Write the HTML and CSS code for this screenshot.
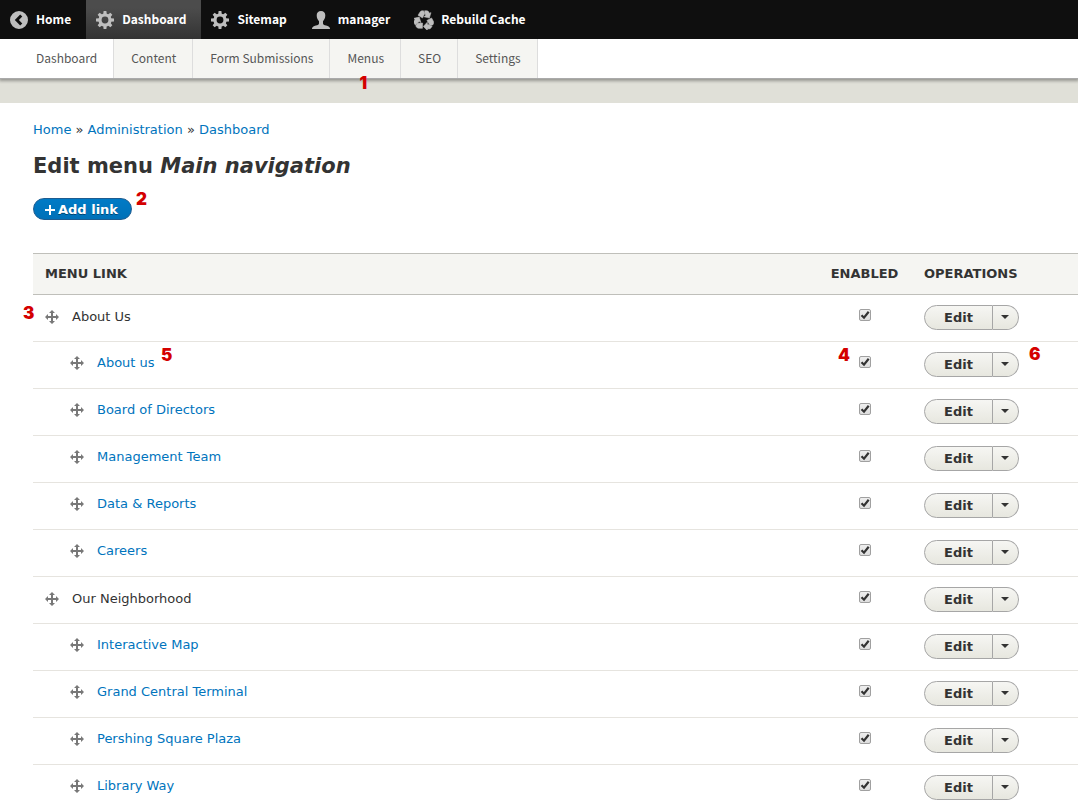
FILE: index.html
```
<!DOCTYPE html>
<html lang="en">
<head>
<meta charset="utf-8">
<meta name="viewport" content="width=device-width, initial-scale=1">
<title>Edit menu Main navigation</title>
<link rel="stylesheet" href="styles.css">
</head>
<body>
<svg class="sprite" aria-hidden="true">
  <symbol id="back" viewBox="0 0 18 18"><path fill-rule="evenodd" d="M9 0a9 9 0 1 0 0 18A9 9 0 0 0 9 0zM10.2 3.600l2.100 2L8.900 9l3.400 3.400-2.100 2L4.800 9z"/></symbol>
  <symbol id="gear" viewBox="0 0 18 18"><circle cx="9" cy="9" r="5" fill="none" stroke="currentColor" stroke-width="3.200"/><path d="M7.200 3.500L7.600 0h2.800l.4 3.500zM7.200 14.500L7.600 18h2.800l.4-3.500zM3.500 7.200L0 7.600v2.800l3.500.4zM14.500 7.200L18 7.600v2.800l-3.500.4z"/><path transform="rotate(45 9 9)" d="M7.200 3.500L7.600 0h2.800l.4 3.500zM7.200 14.500L7.600 18h2.800l.4-3.500zM3.500 7.200L0 7.600v2.800l3.500.4zM14.500 7.200L18 7.600v2.800l-3.500.4z"/></symbol>
  <symbol id="person" viewBox="0 0 18 18"><path d="M9 0C6.300 0 4.700 1.700 4.700 4.300c0 2.700 1 4.700 2.300 5.900v2c0 1-.7 1.600-2 2C2 15 0 15.600 0 17.600V18h18v-.4c0-2-2-2.600-5-3.400-1.300-.4-2-1-2-2v-2c1.300-1.200 2.300-3.200 2.300-5.900C13.300 1.700 11.700 0 9 0z"/></symbol>
  <symbol id="recycle" viewBox="0 0 20 20"><g id="arm" stroke="currentColor" stroke-width=".5"><path d="M4 5.200L6.200 1.700Q7 .7 8.200.7h1.300L10.900 3.300 8.500 8z"/><path d="M10.600.7h2.200q1.200 0 1.800 1l.9 1.600 1.500-.7-1.600 5.500-5.600-1.300 1.700-1z"/></g><use href="#arm" transform="rotate(120 10 10.500)"/><use href="#arm" transform="rotate(240 10 10.500)"/></symbol>
  <symbol id="move" viewBox="0 0 14 14"><path d="M7 0l3 3H8v3h3V4l3 3-3 3V8H8v3h2l-3 3-3-3h2V8H3v2L0 7l3-3v2h3V3H4z"/></symbol>
</svg>

<header class="toolbar">
  <nav class="bar" aria-label="Toolbar">
    <a class="bar-item" href="#"><svg class="bar-icon"><use href="#back"/></svg><span class="bar-label">Home</span></a>
    <a class="bar-item active" href="#"><svg class="bar-icon"><use href="#gear"/></svg><span class="bar-label">Dashboard</span></a>
    <a class="bar-item" href="#"><svg class="bar-icon"><use href="#gear"/></svg><span class="bar-label">Sitemap</span></a>
    <a class="bar-item" href="#"><svg class="bar-icon"><use href="#person"/></svg><span class="bar-label">manager</span></a>
    <a class="bar-item" href="#"><svg class="bar-icon wide"><use href="#recycle"/></svg><span class="bar-label">Rebuild Cache</span></a>
  </nav>
  <nav class="tray" aria-label="Dashboard">
    <a class="tray-item current" href="#">Dashboard</a>
    <a class="tray-item" href="#">Content</a>
    <a class="tray-item" href="#">Form Submissions</a>
    <a class="tray-item" href="#">Menus<span class="note note-menus">1</span></a>
    <a class="tray-item" href="#">SEO</a>
    <a class="tray-item" href="#">Settings</a>
  </nav>
</header>
<div class="band"></div>

<main class="page">
  <nav class="breadcrumb" aria-label="Breadcrumb"><a href="#">Home</a> » <a href="#">Administration</a> » <a href="#">Dashboard</a></nav>
  <h1 class="title">Edit menu <em>Main navigation</em></h1>
  <div class="actions"><button class="add" type="button"><svg class="plus" viewBox="0 0 10 10"><path d="M4 0h2v4h4v2H6v4H4V6H0V4h4z"/></svg>Add link</button><span class="note note-add">2</span></div>

  <table class="links">
    <thead><tr><th>Menu link</th><th class="enabled">Enabled</th><th class="operations">Operations</th></tr></thead>
    <tbody>
      <tr><td><div class="item"><span class="note note-row">3</span><svg class="move"><use href="#move"/></svg><span>About Us</span></div></td><td class="enabled"><input class="check" type="checkbox" checked aria-label="Enable About Us"></td><td><div class="split"><button class="edit" type="button">Edit</button><button class="more" type="button" aria-label="More actions"></button></div></td></tr>
      <tr><td><div class="item child"><svg class="move"><use href="#move"/></svg><a href="#">About us<span class="note note-link">5</span></a></div></td><td class="enabled"><span class="note note-check">4</span><input class="check" type="checkbox" checked aria-label="Enable About us"></td><td><div class="split"><button class="edit" type="button">Edit</button><button class="more" type="button" aria-label="More actions"></button><span class="note note-ops">6</span></div></td></tr>
      <tr><td><div class="item child"><svg class="move"><use href="#move"/></svg><a href="#">Board of Directors</a></div></td><td class="enabled"><input class="check" type="checkbox" checked aria-label="Enable Board of Directors"></td><td><div class="split"><button class="edit" type="button">Edit</button><button class="more" type="button" aria-label="More actions"></button></div></td></tr>
      <tr><td><div class="item child"><svg class="move"><use href="#move"/></svg><a href="#">Management Team</a></div></td><td class="enabled"><input class="check" type="checkbox" checked aria-label="Enable Management Team"></td><td><div class="split"><button class="edit" type="button">Edit</button><button class="more" type="button" aria-label="More actions"></button></div></td></tr>
      <tr><td><div class="item child"><svg class="move"><use href="#move"/></svg><a href="#">Data &amp; Reports</a></div></td><td class="enabled"><input class="check" type="checkbox" checked aria-label="Enable Data &amp; Reports"></td><td><div class="split"><button class="edit" type="button">Edit</button><button class="more" type="button" aria-label="More actions"></button></div></td></tr>
      <tr><td><div class="item child"><svg class="move"><use href="#move"/></svg><a href="#">Careers</a></div></td><td class="enabled"><input class="check" type="checkbox" checked aria-label="Enable Careers"></td><td><div class="split"><button class="edit" type="button">Edit</button><button class="more" type="button" aria-label="More actions"></button></div></td></tr>
      <tr><td><div class="item"><svg class="move"><use href="#move"/></svg><span>Our Neighborhood</span></div></td><td class="enabled"><input class="check" type="checkbox" checked aria-label="Enable Our Neighborhood"></td><td><div class="split"><button class="edit" type="button">Edit</button><button class="more" type="button" aria-label="More actions"></button></div></td></tr>
      <tr><td><div class="item child"><svg class="move"><use href="#move"/></svg><a href="#">Interactive Map</a></div></td><td class="enabled"><input class="check" type="checkbox" checked aria-label="Enable Interactive Map"></td><td><div class="split"><button class="edit" type="button">Edit</button><button class="more" type="button" aria-label="More actions"></button></div></td></tr>
      <tr><td><div class="item child"><svg class="move"><use href="#move"/></svg><a href="#">Grand Central Terminal</a></div></td><td class="enabled"><input class="check" type="checkbox" checked aria-label="Enable Grand Central Terminal"></td><td><div class="split"><button class="edit" type="button">Edit</button><button class="more" type="button" aria-label="More actions"></button></div></td></tr>
      <tr><td><div class="item child"><svg class="move"><use href="#move"/></svg><a href="#">Pershing Square Plaza</a></div></td><td class="enabled"><input class="check" type="checkbox" checked aria-label="Enable Pershing Square Plaza"></td><td><div class="split"><button class="edit" type="button">Edit</button><button class="more" type="button" aria-label="More actions"></button></div></td></tr>
      <tr><td><div class="item child"><svg class="move"><use href="#move"/></svg><a href="#">Library Way</a></div></td><td class="enabled"><input class="check" type="checkbox" checked aria-label="Enable Library Way"></td><td><div class="split"><button class="edit" type="button">Edit</button><button class="more" type="button" aria-label="More actions"></button></div></td></tr>
    </tbody>
  </table>
</main>
</body>
</html>
```
FILE: styles.css
```
* { box-sizing: border-box; }
html { scrollbar-width: none; }
body {
  margin: 0;
  background: #fff;
  color: #333;
  font: 13px/20px "DejaVu Sans", sans-serif;
}
a { color: #0074bd; text-decoration: none; }
button { font: inherit; cursor: pointer; }
.sprite { position: absolute; width: 0; height: 0; }

/* Toolbar */
.toolbar { position: relative; font: 12px/20px "Noto Sans CJK SC", sans-serif; }
.bar { position: relative; z-index: 1; display: flex; height: 39px; background: #0f0f0f; }
.bar-item {
  display: flex;
  align-items: center;
  gap: 8px;
  padding: 0 15px 0 10px;
  color: #fff;
  font-weight: 700;
}
.bar-label { padding-bottom: 2px; }
.bar-item.active { background: linear-gradient(#4c4c4c 20%, #333); }
.bar-icon { width: 18px; height: 18px; fill: #bebebe; color: #bebebe; }
.bar-icon.wide { width: 20px; height: 20px; margin: 0 -1px; }
.tray {
  display: flex;
  height: 40px;
  padding-left: 18px;
  border-bottom: 1px solid #aaa;
  background: #fff;
  box-shadow: 0 1px 3px 1px rgba(0, 0, 0, 0.33);
}
.tray-item {
  position: relative;
  display: flex;
  align-items: center;
  padding: 0 16px 2px 17px;
  border-right: 1px solid #ddd;
  background: #f5f5f2;
  color: #565656;
}
.tray-item.current { background: #fff; padding-left: 18px; }
.band { height: 24px; background: #e0e0d8; }

/* Numbered callouts */
.note {
  position: absolute;
  color: #d40000;
  font: 900 17px/20px Inter, sans-serif;
}
.note-menus { left: 29px; top: 34px; }
.note-add { left: 103px; top: -9px; }
.note-row { left: -22px; top: -4px; }
.note-link { left: 64px; top: -8px; }
.note-check { left: 21px; top: 3px; }
.note-ops { left: 105px; top: -8px; }

/* Page */
.page { padding: 17px 0 0 33px; }
.title { margin: 13px 0 19px; font-size: 21px; line-height: 26px; }
.actions { position: relative; display: flex; margin-bottom: 33px; }
.add {
  display: flex;
  align-items: center;
  gap: 3px;
  height: 22px;
  padding: 1px 13px 0 11px;
  border: 1px solid #1e5c90;
  border-radius: 11px;
  background: linear-gradient(#007bc6, #0071b8);
  color: #fff;
  font-weight: 700;
  text-shadow: 0 1px #0006;
}
.plus { width: 10px; height: 10px; fill: #fff; }

.links { width: 100%; border-collapse: separate; border-spacing: 0; }
.links th {
  height: 42px;
  padding: 0 12px;
  border: solid #bfbfba;
  border-width: 1px 0;
  background: #f5f5f2;
  text-align: left;
  text-transform: uppercase;
}
.links td {
  position: relative;
  height: 47px;
  padding: 0 12px;
  border-bottom: 1px solid #e6e4df;
}
.links .enabled { width: 95px; text-align: center; }
.operations { width: 166px; }
.item { position: relative; display: flex; align-items: center; gap: 13px; padding-bottom: 2px; }
.item a { position: relative; }
.child { padding: 0 0 4px 25px; }
.move { width: 14px; height: 14px; fill: #787878; }

.check {
  appearance: none;
  display: block;
  width: 12px;
  height: 12px;
  margin: 0 auto 6px;
  border: 1px solid #a0a0a0;
  border-radius: 2px;
  background: linear-gradient(#eee, #ddd);
}
.check:checked {
  background: url("data:image/svg+xml,%3Csvg xmlns='http://www.w3.org/2000/svg' viewBox='0 0 10 10'%3E%3Cpath d='M1.500 5.200 4 7.700 8.700 1.800' fill='none' stroke='%23333' stroke-width='2.200'/%3E%3C/svg%3E"), linear-gradient(#eee, #ddd);
}
.split { position: relative; display: flex; width: 95px; height: 25px; margin-bottom: 2px; }
.edit, .more {
  padding: 0;
  border: 1px solid #a6a6a6;
  background: linear-gradient(#f6f6f3, #e7e7df);
  color: #333;
  font-weight: 700;
}
.edit { width: 69px; padding-top: 1px; border-radius: 13px 0 0 13px; }
.more {
  display: grid;
  place-items: center;
  flex: 1;
  padding-right: 2px;
  border-left: 0;
  border-radius: 0 13px 13px 0;
}
.more::before { content: ""; border: solid transparent; border-width: 4px 4px 0; border-top-color: #333; }
```
